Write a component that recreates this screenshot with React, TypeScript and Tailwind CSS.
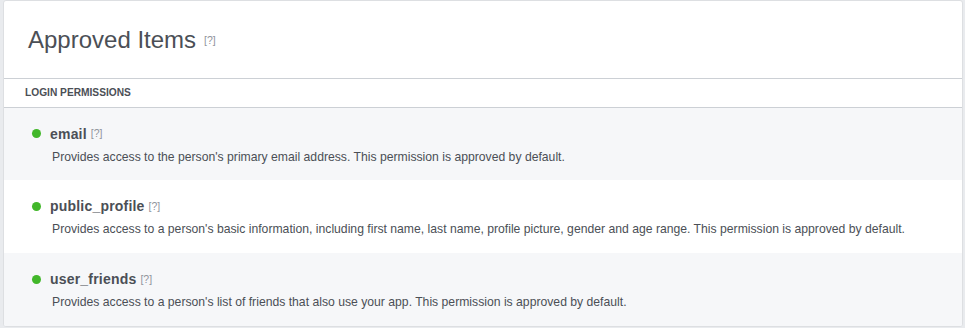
const permissions = [
  {
    name: 'email',
    desc: "Provides access to the person's primary email address. This permission is approved by default.",
  },
  {
    name: 'public_profile',
    desc: "Provides access to a person's basic information, including first name, last name, profile picture, gender and age range. This permission is approved by default.",
  },
  {
    name: 'user_friends',
    desc: "Provides access to a person's list of friends that also use your app. This permission is approved by default.",
  },
]

function Help({ className }: { className: string }) {
  return <span className={`text-[#90949c] font-normal ${className}`}>[?]</span>
}

export default function App() {
  return (
    <div className="w-[965px] h-[328px] bg-[#e9ebee] pl-[3px] pr-[2px] font-['Liberation_Sans',Arial,sans-serif] text-[#4b4f56]">
      <div className="h-[327px] bg-white border border-[#dddfe2] rounded-[3px] overflow-hidden flex flex-col">
        {/* header */}
        <div className="h-[78px] flex items-center pl-6 pt-[2px] border-b border-[#ccd0d5]">
          <h1 className="text-[24px] leading-none font-normal">Approved Items</h1>
          <Help className="text-[10.5px] ml-[8px] mt-[2px]" />
        </div>

        <div className="h-[29px] flex items-center pl-[21px] border-b border-[#ccd0d5]">
          <span className="text-[10.2px] font-bold uppercase text-[#4b4f56]">Login Permissions</span>
        </div>

        {permissions.map((p, i) => (
          <div
            key={p.name}
            className={`h-[73px] pl-[28px] pt-[17px] ${i % 2 === 0 ? 'bg-[#f6f7f9]' : 'bg-white'}`}
          >
            <div className="flex items-center h-[18px]">
              <span className="w-[9px] h-[9px] rounded-full bg-[#42b72a] mr-[9px]" />
              <span className="text-[14px] font-bold leading-none tracking-[0.2px]">{p.name}</span>
              <Help className="text-[10.5px] ml-[4px] mt-[1px]" />
            </div>
            <p className="text-[12.2px] leading-4 mt-[6px] ml-[20px]">{p.desc}</p>
          </div>
        ))}
      </div>
    </div>
  )
}
